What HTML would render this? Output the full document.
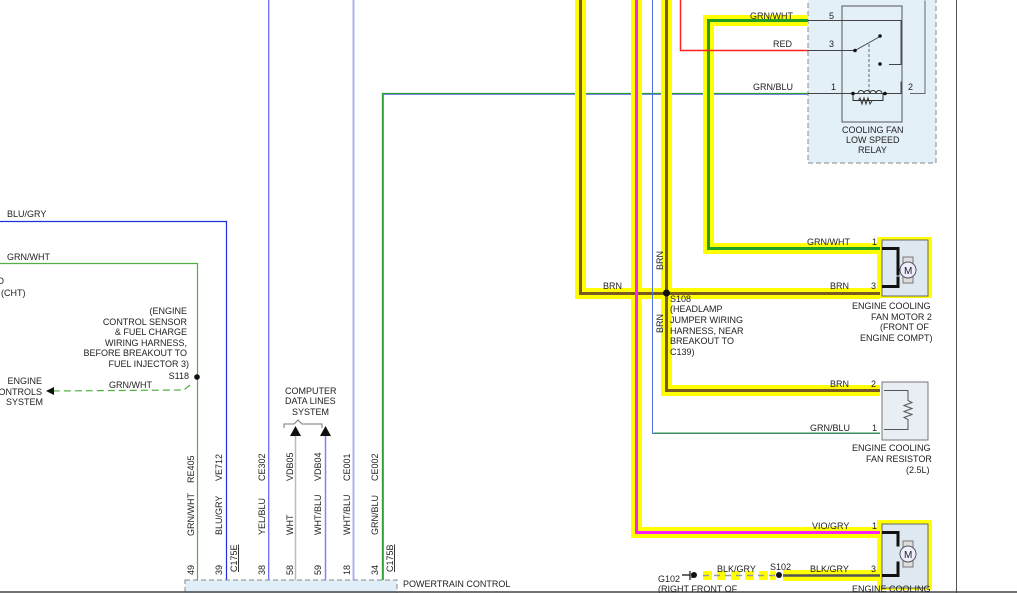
<!DOCTYPE html>
<html><head><meta charset="utf-8"><style>
html,body{margin:0;padding:0;background:#fff;overflow:hidden}
svg{display:block}
text{font-family:"Liberation Sans",sans-serif;font-size:9px;fill:#222}
</style></head><body>
<svg width="1017" height="593" viewBox="0 0 1017 593" xmlns="http://www.w3.org/2000/svg">
<rect x="808" y="-2" width="128" height="165" fill="#e4f0f8" stroke="#888" stroke-dasharray="5,3"/>
<rect x="842" y="6" width="60" height="116" fill="none" stroke="#555"/>
<line x1="268.5" y1="0" x2="268.5" y2="580" stroke="#7070ff" stroke-width="1"/>
<line x1="269.5" y1="0" x2="269.5" y2="580" stroke="#f0e040" stroke-width="1"/>
<line x1="353.5" y1="0" x2="353.5" y2="580" stroke="#b0b0f0" stroke-width="2"/>
<polyline points="383.5,580 383.5,94.5 808,94.5" fill="none" stroke="#8080ff" stroke-width="1"/>
<polyline points="382.5,580 382.5,93.5 808,93.5" fill="none" stroke="#30a030" stroke-width="1.3"/>
<line x1="295.5" y1="432" x2="295.5" y2="580" stroke="#bbb" stroke-width="1.5"/>
<line x1="325.5" y1="432" x2="325.5" y2="580" stroke="#8080ff" stroke-width="1.5"/>
<polygon points="290,436 301,436 295.5,426" fill="#111"/>
<polygon points="320,436 331,436 325.5,426" fill="#111"/>
<path d="M284,428 v-4 h10 l4,-4 l4,4 h20 v4" fill="none" stroke="#777"/>
<polyline points="0,221.5 226.5,221.5 226.5,580" fill="none" stroke="#2030e0" stroke-width="1.2"/>
<polyline points="0,263.5 197.5,263.5 197.5,580" fill="none" stroke="#50b040" stroke-width="1.2"/>
<circle cx="197" cy="377" r="2.8" fill="#111"/>
<path d="M190,385 L184,390 L52,391" fill="none" stroke="#50b040" stroke-width="1.2" stroke-dasharray="7,4"/>
<polygon points="46,391 54,387 54,395" fill="#111"/>
<g fill="#ffff00">
<rect x="575" y="0" width="11" height="299"/>
<rect x="575" y="288" width="305" height="11"/>
<rect x="631" y="0" width="11" height="538"/>
<rect x="631" y="527" width="249" height="11"/>
<rect x="661" y="0" width="11" height="396"/>
<rect x="661" y="385" width="219" height="11"/>
<rect x="703" y="15" width="105" height="11"/>
<rect x="703" y="15" width="11" height="239"/>
<rect x="703" y="243" width="177" height="11"/>
<rect x="877" y="237" width="55" height="61"/>
<rect x="877" y="520" width="55" height="70"/>
<rect x="783" y="570" width="97" height="11"/>
</g>
<g fill="#ffff00"><rect x="703" y="571" width="9" height="9"/><rect x="717" y="571" width="9" height="9"/><rect x="731" y="571" width="9" height="9"/><rect x="745" y="571" width="9" height="9"/><rect x="759" y="571" width="9" height="9"/><rect x="770" y="571" width="6" height="9"/></g>
<polyline points="580.5,0 580.5,293.5 880,293.5" fill="none" stroke="#7a5a20" stroke-width="3"/>
<polyline points="636.5,0 636.5,532.5 880,532.5" fill="none" stroke="#ff20ff" stroke-width="3"/>
<polyline points="666.5,0 666.5,390.5 880,390.5" fill="none" stroke="#7a5a20" stroke-width="3"/>
<polyline points="808,20.5 708.5,20.5 708.5,248.5 880,248.5" fill="none" stroke="#20a020" stroke-width="3"/>
<polyline points="652.5,0 652.5,433.5 880,433.5" fill="none" stroke="#5070e0" stroke-width="1"/>
<line x1="653.5" y1="433" x2="880" y2="433" stroke="#30a030" stroke-width="1"/>
<polyline points="680.5,0 680.5,50.5 808,50.5" fill="none" stroke="#ff2020" stroke-width="1.5"/>
<line x1="783" y1="575.5" x2="880" y2="575.5" stroke="#555" stroke-width="2.5"/>
<line x1="703" y1="575.5" x2="776" y2="575.5" stroke="#999" stroke-width="1.5" stroke-dasharray="6,5"/>
<circle cx="779" cy="575" r="3" fill="#111"/>
<circle cx="666.5" cy="293" r="3.5" fill="#111"/>
<path d="M682,575 h8 M690,571 v9 M692,573 v5" stroke="#111" stroke-width="1.2"/>
<circle cx="694" cy="575" r="3" fill="#111"/>
<path d="M808,20.5 H845 M845,20.5 h56 v44 h-12 M808,50.5 H855 l25,-14 M808,93.5 H901 v-12 M855,93.5 h31" fill="none" stroke="#444" stroke-width="1"/>
<circle cx="855" cy="50.5" r="1.8" fill="#111"/><circle cx="880" cy="36" r="1.8" fill="#111"/><circle cx="880" cy="64" r="1.8" fill="#111"/>
<line x1="869" y1="44" x2="869" y2="93" stroke="#666" stroke-dasharray="3,2"/>
<path d="M853,93.5 h5 a3,3 0 0 1 6,0 a3,3 0 0 1 6,0 a3,3 0 0 1 6,0 a3,3 0 0 1 6,0 h3 M853,93.5 v7 h30 v-7 M858,101 l2,-3 2,6 2,-6 2,6 2,-6 2,6 2,-3" fill="none" stroke="#333"/>
<circle cx="853" cy="93.5" r="1.8" fill="#111"/><circle cx="885" cy="93.5" r="1.8" fill="#111"/>
<path d="M910,93.5 h15 v-93" fill="none" stroke="#666"/>
<rect x="882" y="240" width="46" height="56" fill="#dde8f0" stroke="#666"/>
<path d="M882,248.5 h16 v27 M882,286.5 h16 v-10" fill="none" stroke="#111" stroke-width="3"/>
<rect x="903" y="257" width="10" height="26" fill="#ddd" stroke="#777"/>
<circle cx="908" cy="270" r="8" fill="#eef" stroke="#555"/>
<text x="904" y="274" style="font-size:10px">M</text>
<rect x="882" y="382" width="46" height="58" fill="#e8eef4" stroke="#777"/>
<path d="M884,390.5 h24 v10 l4,2 -8,3 8,3 -8,3 8,3 -8,3 4,2 v10 h-24" fill="none" stroke="#555"/>
<rect x="882" y="524" width="46" height="64" fill="#dde8f0" stroke="#666"/>
<path d="M882,532.5 h16 v14 M882,575.5 h16 v-14" fill="none" stroke="#111" stroke-width="3"/>
<rect x="903" y="541" width="10" height="26" fill="#ddd" stroke="#777"/>
<circle cx="908" cy="554" r="8" fill="#eef" stroke="#555"/>
<text x="904" y="558" style="font-size:10px">M</text>
<line x1="956.5" y1="0" x2="956.5" y2="593" stroke="#555"/>
<rect x="185" y="580" width="212" height="14" fill="#e0eef8" stroke="#888" stroke-dasharray="5,3"/>
<line x1="0" y1="592" x2="1017" y2="592" stroke="#444" stroke-width="1.5"/>
<text x="750" y="19">GRN/WHT</text><text x="829" y="19">5</text>
<text x="773" y="47">RED</text><text x="829" y="47">3</text>
<text x="753" y="90">GRN/BLU</text><text x="831" y="90">1</text><text x="908" y="90">2</text>
<text x="842" y="133">COOLING FAN</text><text x="846" y="143">LOW SPEED</text><text x="858" y="153">RELAY</text>
<text x="807" y="245">GRN/WHT</text><text x="872" y="245">1</text>
<text x="603" y="289">BRN</text><text x="830" y="289">BRN</text><text x="871" y="289">3</text>
<text x="852" y="309">ENGINE COOLING</text><text x="871" y="320">FAN MOTOR 2</text><text x="880" y="330">(FRONT OF</text><text x="860" y="341">ENGINE COMPT)</text>
<text x="670" y="302">S108</text><text x="670" y="312">(HEADLAMP</text><text x="670" y="323">JUMPER WIRING</text><text x="670" y="334">HARNESS, NEAR</text><text x="670" y="344">BREAKOUT TO</text><text x="670" y="355">C139)</text>
<text transform="translate(663,270) rotate(-90)">BRN</text>
<text transform="translate(663,333) rotate(-90)">BRN</text>
<text x="830" y="387">BRN</text><text x="871" y="387">2</text>
<text x="810" y="431">GRN/BLU</text><text x="872" y="431">1</text>
<text x="852" y="451">ENGINE COOLING</text><text x="866" y="462">FAN RESISTOR</text><text x="906" y="473">(2.5L)</text>
<text x="812" y="529">VIO/GRY</text><text x="872" y="529">1</text>
<text x="810" y="572">BLK/GRY</text><text x="871" y="572">3</text>
<text x="717" y="572">BLK/GRY</text><text x="770" y="570">S102</text>
<text x="658" y="582">G102</text><text x="658" y="592">(RIGHT FRONT OF</text>
<text x="852" y="592">ENGINE COOLING</text>
<text x="7" y="217">BLU/GRY</text>
<text x="7" y="260">GRN/WHT</text>
<text x="-3" y="284">O</text><text x="1" y="296">(CHT)</text>
<g text-anchor="end"><text x="187" y="314">(ENGINE</text><text x="187" y="325">CONTROL SENSOR</text><text x="187" y="335">&amp; FUEL CHARGE</text><text x="187" y="346">WIRING HARNESS,</text><text x="187" y="356">BEFORE BREAKOUT TO</text><text x="189" y="367">FUEL INJECTOR 3)</text><text x="189" y="379">S118</text>
<text x="42" y="384">ENGINE</text><text x="42" y="395">CONTROLS</text><text x="43" y="405">SYSTEM</text></g>
<text x="109" y="388">GRN/WHT</text>
<text x="285" y="394">COMPUTER</text><text x="285" y="404">DATA LINES</text><text x="292" y="415">SYSTEM</text>
<g>
<text transform="translate(194,483) rotate(-90)">RE405</text>
<text transform="translate(194,536) rotate(-90)">GRN/WHT</text>
<text transform="translate(194,575) rotate(-90)">49</text>
<text transform="translate(222,481) rotate(-90)">VE712</text>
<text transform="translate(222,535) rotate(-90)">BLU/GRY</text>
<text transform="translate(222,575) rotate(-90)">39</text>
<text transform="translate(237,572) rotate(-90)" style="text-decoration:underline">C175E</text>
<text transform="translate(265,481) rotate(-90)">CE302</text>
<text transform="translate(265,535) rotate(-90)">YEL/BLU</text>
<text transform="translate(265,575) rotate(-90)">38</text>
<text transform="translate(293,481) rotate(-90)">VDB05</text>
<text transform="translate(293,535) rotate(-90)">WHT</text>
<text transform="translate(293,575) rotate(-90)">58</text>
<text transform="translate(321,481) rotate(-90)">VDB04</text>
<text transform="translate(321,535) rotate(-90)">WHT/BLU</text>
<text transform="translate(321,575) rotate(-90)">59</text>
<text transform="translate(350,481) rotate(-90)">CE001</text>
<text transform="translate(350,535) rotate(-90)">WHT/BLU</text>
<text transform="translate(350,575) rotate(-90)">18</text>
<text transform="translate(378,481) rotate(-90)">CE002</text>
<text transform="translate(378,535) rotate(-90)">GRN/BLU</text>
<text transform="translate(378,575) rotate(-90)">34</text>
<text transform="translate(393,572) rotate(-90)" style="text-decoration:underline">C175B</text>
</g>
<text x="403" y="587">POWERTRAIN CONTROL</text>
</svg>
</body></html>
